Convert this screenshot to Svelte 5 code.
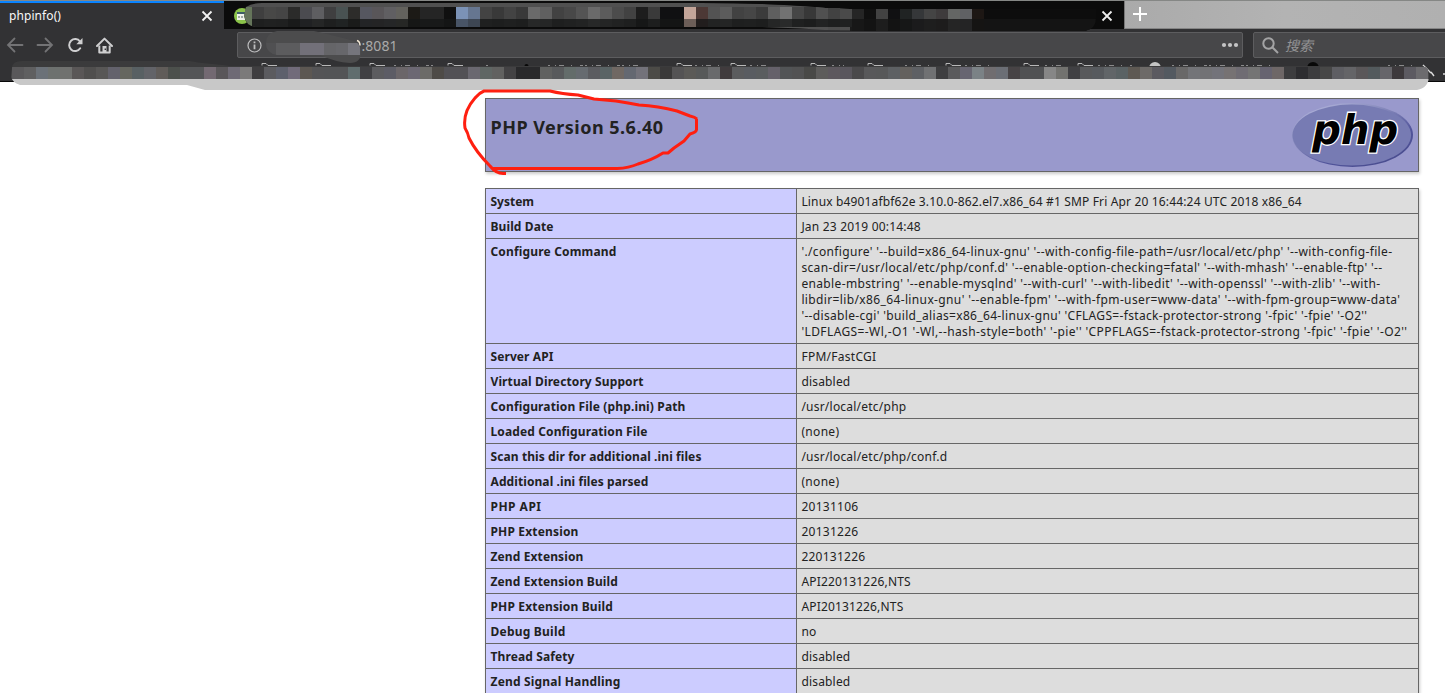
<script>
  const rows = [
    ['System', 43.5, [['Linux b4901afbf62e 3.10.0-862.el7.x86_64 #1 SMP Fri Apr 20 16:44:24 UTC 2018 x86_64', 500.5]]],
    ['Build Date', 63, [['Jan 23 2019 00:14:48', 119.5]]],
    ['Configure Command', 126, [
      ["'./configure' '--build=x86_64-linux-gnu' '--with-config-file-path=/usr/local/etc/php' '--with-config-file-", 591],
      ["scan-dir=/usr/local/etc/php/conf.d' '--enable-option-checking=fatal' '--with-mhash' '--enable-ftp' '--", 581],
      ["enable-mbstring' '--enable-mysqlnd' '--with-curl' '--with-libedit' '--with-openssl' '--with-zlib' '--with-", 579],
      ["libdir=lib/x86_64-linux-gnu' '--enable-fpm' '--with-fpm-user=www-data' '--with-fpm-group=www-data'", 599],
      ["'--disable-cgi' 'build_alias=x86_64-linux-gnu' 'CFLAGS=-fstack-protector-strong '-fpic' '-fpie' '-O2''", 566],
      ["'LDFLAGS=-Wl,-O1 '-Wl,--hash-style=both' '-pie'' 'CPPFLAGS=-fstack-protector-strong '-fpic' '-fpie' '-O2''", 606]
    ]],
    ['Server API', 63, [['FPM/FastCGI', 75]]],
    ['Virtual Directory Support', 153, [['disabled', 49]]],
    ['Configuration File (php.ini) Path', 195, [['/usr/local/etc/php', 105]]],
    ['Loaded Configuration File', 157, [['(none)', 38]]],
    ['Scan this dir for additional .ini files', 211, [['/usr/local/etc/php/conf.d', 146]]],
    ['Additional .ini files parsed', 158, [['(none)', 38]]],
    ['PHP API', 51, [['20131106', 57]]],
    ['PHP Extension', 88, [['20131226', 57]]],
    ['Zend Extension', 93, [['220131226', 64]]],
    ['Zend Extension Build', 127.5, [['API220131226,NTS', 109.5]]],
    ['PHP Extension Build', 122.5, [['API20131226,NTS', 102]]],
    ['Debug Build', 75, [['no', 15]]],
    ['Thread Safety', 84, [['disabled', 49]]],
    ['Zend Signal Handling', 130, [['disabled', 49]]]
  ];

  // Spreads the letters so that a line takes the given width.
  function fit(node, width) {
    const natural = node.getBoundingClientRect().width;
    node.style.letterSpacing = `${(width - natural) / node.textContent.length}px`;
  }

  const tabTiles = '3f3f3f 484847 454545 2b2b2a 4b4b50 5e5e61 3f3f40 495252 2d2c2a 565760 595659 605f62 63625d 1c1a16 252525 252525 101010 7b92b6 667690 434343 393939 434343 393939 6a6a6a 606060 424242 484848 545454 6a6a6a 5c5c5c 4c4c4c 424242 1d1d1d 3a3a3a 101012 101012 c3a599 4c3835 535353 5c5c5c 424242 464646 3b3b3b 5f5f5f 727272 464646 383838 505050 424242 4a4a4a 252525 101010 424242 101012 202323 353739 444444 3e3b3c 646664 606164 1d1714'.split(' ');
  const markTiles = '59585a 5f5f60 6b7178 6d716f 70716f 5a5757 504f4e 585756 63626c 65665f 586063 626368 605c59 4c504c 545557 545557 736972 595659 6e6a75 7b7a7a 3f3e40 5b5b5f 5d606c 716b7a 5c5752 545456 535456 535456 606d6e 404043 5c5c5f 5c5c65 6b6669 6c6873 6c6b68 4e4b47 525155 525155 6a6870 5f6664 616160 434244 29292b 29292b 606160 585a5c 636c6a 666b70 5b5c60 5a6465 706863 646871 73727a 4c4b47 3a3939 545354 5b5a57 575959 696a6c 403b3d 5b5c5e 595c61 5a5d5f 65616a 525456 525253 494947 5d5c5b 5d585e 59565d 4a494b 58585a 575859 5d6063 64615e 5e6064 707173 3e3e40 5a5a5c 676571 7b8286 706d70 6b6e75 474345 505153 505153 868686 72726f 404043 58595b 575a5e 616568 5a6264 5e5953 6d6a68 5b5a60 535960 696868 737478 727275 73737a 767273 6f6c73 747474 666370 6e6767 3d3d3f 2d2d30 3c3c3e 474747 5e5e63 646467 5a5759 535a5d 66656a 3d393c 5c5a61 6c6b6e'.split(' ');
  const folders = [262, 316, 370, 448, 677, 731, 811, 868, 946, 1024, 1078];
  const specks = [[394, 40], [486, 4], [548, 95], [695, 24], [750, 20], [832, 12], [905, 30], [965, 28], [1045, 20], [1098, 34], [1172, 106], [1388, 30]];
</script>

<div class="screen">
  <header>
    <div class="tabs">
      <div class="tab active"><span use:fit={52}>phpinfo()</span>
        <svg width="12" height="12" viewBox="0 0 12 12"><path d="M1.5 1.5l9 9m0-9l-9 9" stroke="#f2f2f2" stroke-width="1.8" /></svg>
      </div>
      <div class="tab hidden">
        <svg width="12" height="12" viewBox="0 0 12 12"><path d="M1.5 1.5l9 9m0-9l-9 9" stroke="#eee" stroke-width="1.8" /></svg>
      </div>
      <div class="strip"><svg width="14" height="14" viewBox="0 0 14 14"><path d="M7 0v14M0 7h14" stroke="#fff" stroke-width="2" /></svg></div>
    </div>
    <div class="toolbar">
      <div class="nav">
        <svg width="18" height="16" viewBox="0 0 18 16" fill="none" stroke="#737375" stroke-width="1.8"><path d="M8.5 1.5L2 8l6.5 6.5M2 8h14.5" stroke-linecap="round" /></svg>
        <svg width="18" height="16" viewBox="0 0 18 16" fill="none" stroke="#737375" stroke-width="1.8"><path d="M9.5 1.5L16 8l-6.5 6.5M16 8H1.5" stroke-linecap="round" /></svg>
        <svg width="16" height="16" viewBox="0 0 16 16" fill="none" stroke="#cfcfd0" stroke-width="2"><path d="M13.2 11.3A6 6 0 1 1 13 4.5" stroke-linecap="round" /><path d="M15.5 1v6.2H9.3z" fill="#cfcfd0" stroke="none" /></svg>
        <svg width="17" height="17" viewBox="0 0 17 17" fill="none" stroke="#cfcfd0" stroke-width="2"><path d="M1 9l7.5-7.4L16 9" stroke-linecap="round" stroke-linejoin="round" /><path d="M3.3 8.5V15.5h10.4V8.5" stroke-linejoin="round" /><path d="M6.5 15V9h4v6z" fill="#cfcfd0" stroke="none" /><path d="M8.6 11.6h1.4v1.5H8.6z" fill="#38383a" stroke="none" /></svg>
      </div>
      <div class="field url">
        <svg width="15" height="15" viewBox="0 0 15 15" fill="none" stroke="#bdbdbe"><circle cx="7.5" cy="7.5" r="6.5" stroke-width="1.2" /><path d="M7.5 6.5v4.7M7.5 3.6v1.7" stroke-width="1.8" /></svg>
        <span class="port" use:fit={36}>:8081</span>
        <svg class="dots" width="18" height="6" viewBox="0 0 18 6" fill="#c4c4c5"><circle cx="3" cy="3" r="2.1" /><circle cx="9" cy="3" r="2.1" /><circle cx="15" cy="3" r="2.1" /></svg>
      </div>
      <div class="field search">
        <svg width="17" height="17" viewBox="0 0 17 17" fill="none" stroke="#a3a3a4" stroke-width="2"><circle cx="6.5" cy="6.5" r="5.2" /><path d="M10.3 10.3l5.7 5.7" /></svg>
        <span>搜索</span>
      </div>
    </div>
  </header>

  <main>
    <div class="banner">
      <h1 use:fit={173}>PHP Version 5.6.40</h1>
      <svg width="124" height="66" viewBox="0 0 124 66">
        <defs><linearGradient id="rim" x1="0.1" y1="0" x2="0.85" y2="1"><stop offset="0" stop-color="#b7b9df" /><stop offset=".4" stop-color="#8285b9" /><stop offset=".7" stop-color="#50539a" /><stop offset="1" stop-color="#484b8c" /></linearGradient></defs>
        <ellipse cx="61.5" cy="32" rx="60.5" ry="32" fill="url(#rim)" />
        <ellipse cx="60.8" cy="32.1" rx="59.3" ry="30.5" fill="#777bb3" />
        <g transform="translate(19 41) skewX(-11)"><text x="0" y="0" textLength="86" lengthAdjust="spacingAndGlyphs">php</text></g>
      </svg>
    </div>

    <div class="table">
      {#each rows as [key, width, lines]}
        <div class="row">
          <div class="key"><span use:fit={width}>{key}</span></div>
          <div class="value">
            {#each lines as [line, w]}<div><span use:fit={w}>{line}</span></div>{/each}
          </div>
        </div>
      {/each}
    </div>
  </main>

  <svg class="marks" width="1445" height="693" viewBox="0 0 1445 693">
    <defs>
      <clipPath id="tabClip"><path d="M246 7Q252 3 262 3H700Q780 3 826 8L900 9H1096V18Q1096 29 1085 31H840Q800 28 760 27H256Q246 26 244 16Z" /></clipPath>
      <clipPath id="markClip"><path d="M12 68Q12 61 22 61H190Q205 64 230 65H1420Q1429 67 1429 75Q1429 88 1417 90H205L187 85H20Q12 82 11 77Z" /></clipPath>
      <clipPath id="urlClip"><path d="M277 31H314Q336 36 354 41Q361 44 361 52Q361 63 350 63Q335 62 320 55H277Q266 53 266 43Q266 33 277 31Z" /></clipPath>
    </defs>

    <circle cx="242" cy="16" r="8" fill="#8bc34a" /><path d="M237 12h9v8h-9z" fill="#eef3e8" /><path d="M237 12h9v2h-9z" fill="#3e5d68" />
    <path d="M238 16l2 2m0-2l-2 2m3-2l2 2m0-2l-2 2" stroke="#8a9490" stroke-width=".8" />
    <g clip-path="url(#tabClip)">
      <path d="M244 3H700Q780 3 850 9V30H244z" fill="#505050" /><path d="M850 9H1100V32H850z" fill="#0d0d0d" />
      <path d="M244 19H852V27H244z" fill="#151616" /><path d="M852 19H1096V31H852z" fill="#141414" />
      {#each tabTiles as c, i}
        <rect x={252 + i * 12} y={i > 48 ? 9 : 7} width="12" height={i > 48 ? 10 : 12} fill={'#' + c} />
        <rect x={252 + i * 12} y="19" width="12" height={i > 47 ? 12 : 8} fill={'#' + c} opacity={i === 17 || i === 18 || i === 36 ? .5 : .22} />
      {/each}
      <rect x="244" y="7" width="8" height="19" fill="#65755a" />
    </g>

    <g clip-path="url(#urlClip)">
      <rect x="260" y="30" width="105" height="35" fill="#4c4c4d" />
      <rect x="264" y="43" width="12" height="12" fill="#505052" /><rect x="276" y="43" width="24" height="12" fill="#5c5c5e" /><rect x="300" y="43" width="24" height="12" fill="#727079" /><rect x="324" y="43" width="12" height="12" fill="#656568" /><rect x="336" y="43" width="12" height="12" fill="#67676b" /><rect x="348" y="43" width="12" height="12" fill="#75757c" />
    </g>
    <path d="M357 40.500q3 1 3 5" fill="none" stroke="#f4e9d6" stroke-width="1.5" />

    {#each folders as x}<path d={`M${x} 65.5v-2h4l2 2h9`} fill="none" stroke="#b8b8b8" />{/each}
    {#each specks as [x, w]}<path d={`M${x} 65.5h${w}`} stroke="#8a8a8b" stroke-dasharray="2 5 1 3 5 7 1 8 3 2" />{/each}
    <circle cx="1155" cy="68" r="6" fill="#c4c4c4" /><circle cx="1313" cy="68" r="6" fill="#080808" /><circle cx="526.500" cy="66" r="2" fill="#080808" />
    <path d="M1423 65l8 8m0-1l3 4m9-2h2" stroke="#ddd" stroke-width="1.4" fill="none" />
    <g clip-path="url(#markClip)">
      <path d="M10 60H190L230 66H1432V68H10z" fill="#3b3b3c" />
      <rect x="10" y="67" width="1422" height="12" fill="#4a4a4b" />
      <rect x="10" y="79" width="1422" height="12" fill="#c8c8c8" />
      {#each markTiles as c, i}<rect x={12 + i * 12} y="67" width="12" height="12" fill={'#' + c} />{/each}
    </g>

    <path d="M697 119Q695 117 690 116L677 111Q658 106 639 105L628 103L616 101L594 99L578 95Q562 94 550 91H484Q479 93 475 98C468 106 463 115 465 128Q468 133 469 138C475 150 482 158 490 166Q496 173.500 503 173.500H506M493 168.500H617Q629 168 638 164Q652 160 663 153H668L674 148L684 141L690 134Q697 132 696.500 129V119" fill="none" stroke="#ff1f10" stroke-width="3" stroke-linejoin="round" />
  </svg>
</div>

<style>
  :global(body) { margin: 0; background: #fff; overflow: hidden; }
  .screen { position: relative; width: 1445px; height: 693px; overflow: hidden; font-family: "Noto Sans", "Noto Sans CJK SC", sans-serif; color: #222; }
  header { height: 81px; background: #323234; border-bottom: 1px solid #080808; }
  .tabs { display: flex; height: 29px; box-sizing: border-box; border-top: 1px solid #858785; background: #323234; }
  .tab { display: flex; align-items: center; justify-content: space-between; box-sizing: border-box; }
  .active { width: 224px; height: 28px; border-top: 2px solid #0a84ff; padding: 0 11px 0 9px; color: #f8f8f8; font-size: 12px; }
  .active span { margin-top: -1px; }
  .hidden { width: 901px; height: 28px; background: #0b0b0b; border-right: 1px solid #777; justify-content: flex-end; padding: 2px 11px 0 0; }
  .strip { flex: 1; box-sizing: border-box; height: 28px; padding: 6px 0 0 8px; background: linear-gradient(90deg, #aaa, #b3b3b3 50%, #b0b0b0); border-bottom: 1px solid #858585; }
  .strip svg { display: block; }
  .toolbar { display: flex; padding-top: 3px; height: 26px; }
  .nav { display: flex; align-items: center; box-sizing: border-box; width: 237px; padding-left: 6px; flex-shrink: 0; }
  .nav svg:nth-child(2) { margin-left: 12px; }
  .nav svg:nth-child(3) { margin-left: 13px; }
  .nav svg:nth-child(4) { margin-left: 13px; }
  .field { display: flex; align-items: center; box-sizing: border-box; height: 26px; background: #474749; border: 1px solid #5d5d5f; border-radius: 2px; }
  .url { width: 1006px; padding: 0 3px 0 8.5px; flex-shrink: 0; }
  .port { margin-left: 100px; font-size: 14px; color: #aaa; }
  .dots { margin-left: auto; }
  .search { width: 200px; margin-left: 10px; padding-left: 7px; flex-shrink: 0; }
  .search span { margin-left: 6px; font-size: 14px; font-style: italic; color: #929294; }
  .search svg { margin-left: 1px; }
  main { padding: 16px 26px 0 485px; }
  .banner { display: flex; justify-content: space-between; box-sizing: border-box; width: 934px; height: 74px; padding: 4px 3px 0 4.5px; border: 1px solid #666; background: #9999cc; box-shadow: 1px 2px 3px #ccc; }
  h1 { margin: 12px 0 0; height: 24px; line-height: 24px; font-size: 18px; font-weight: 700; white-space: nowrap; align-self: flex-start; }
  .banner text { font: 700 41px "DejaVu Sans", sans-serif; fill: #000; stroke: #fff; stroke-width: 2.6px; paint-order: stroke; }
  .table { width: 934px; margin-top: 16px; box-sizing: border-box; border: 1px solid #666; border-bottom: 0; box-shadow: 1px 2px 3px #ccc; font-size: 12px; line-height: 16px; }
  .row { display: grid; grid-template-columns: 311px 1fr; border-bottom: 1px solid #666; }
  .key, .value { padding: 5px 4px 3px; white-space: nowrap; }
  .key { padding-left: 4.5px; background: #ccccff; font-weight: 700; border-right: 1px solid #666; box-sizing: border-box; }
  .value { padding-left: 4.4px; background: #ddd; }
  .marks { position: absolute; left: 0; top: 0; pointer-events: none; }
</style>
